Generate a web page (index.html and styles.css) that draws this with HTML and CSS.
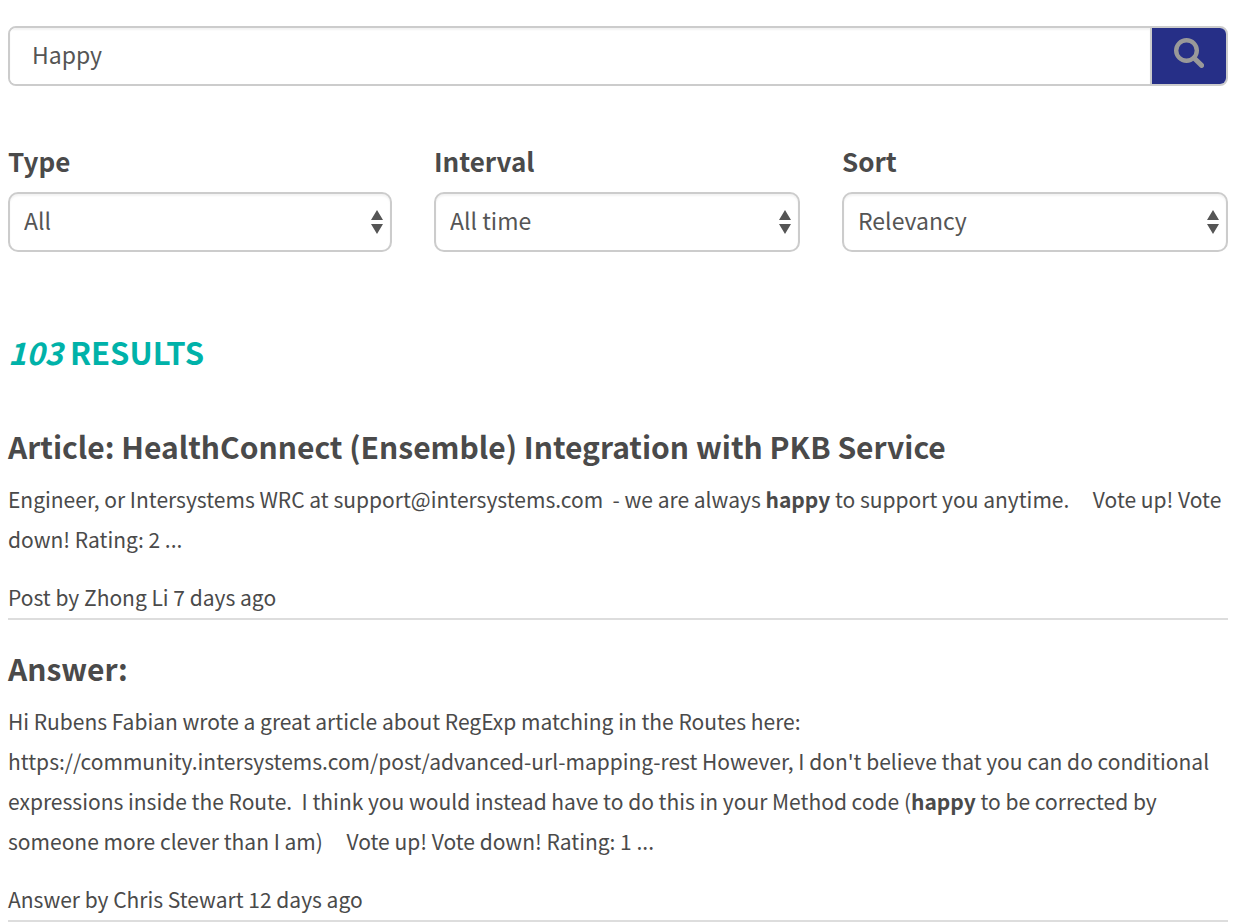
FILE: index.html
```html
<!DOCTYPE html>
<html lang="en">
<head>
  <meta charset="UTF-8" />
  <meta name="viewport" content="width=device-width, initial-scale=1.0"/>
  <title>Search results</title>
  <link rel="stylesheet" href="styles.css">
</head>
<body>
  <main class="search-page">
    <form class="search-box" onsubmit="event.preventDefault();">
      <input type="text" id="searchInput" value="Happy" aria-label="Search" />
      <button type="submit" aria-label="Search">
        <svg viewBox="0 0 30 30" width="30" height="30" aria-hidden="true">
          <circle cx="12.5" cy="12.5" r="10.3" fill="none" stroke="#999" stroke-width="4.4"/>
          <path d="M20 20l7.6 7.4" stroke="#999" stroke-width="5" stroke-linecap="round"/>
        </svg>
      </button>
    </form>

    <div class="filters">
      <div class="filter">
        <label for="type">Type</label>
        <div class="select-wrap">
          <select id="type">
            <option>All</option>
          </select>
          <svg class="arrows" viewBox="0 0 12 24" width="12" height="24" aria-hidden="true">
            <path d="M6 0l6 10H0zM0 14h12L6 24z" fill="#555"/>
          </svg>
        </div>
      </div>
      <div class="filter">
        <label for="interval">Interval</label>
        <div class="select-wrap">
          <select id="interval">
            <option>All time</option>
          </select>
          <svg class="arrows" viewBox="0 0 12 24" width="12" height="24" aria-hidden="true">
            <path d="M6 0l6 10H0zM0 14h12L6 24z" fill="#555"/>
          </svg>
        </div>
      </div>
      <div class="filter">
        <label for="sort">Sort</label>
        <div class="select-wrap">
          <select id="sort">
            <option>Relevancy</option>
          </select>
          <svg class="arrows" viewBox="0 0 12 24" width="12" height="24" aria-hidden="true">
            <path d="M6 0l6 10H0zM0 14h12L6 24z" fill="#555"/>
          </svg>
        </div>
      </div>
    </div>

    <h1><em>103</em> Results</h1>

    <article class="result">
      <h2>Article: HealthConnect (Ensemble) Integration with PKB Service</h2>
      <p class="snippet">Engineer, or Intersystems WRC at support@intersystems.com&nbsp; - we are always <strong>happy</strong> to support you anytime. &nbsp;&nbsp;&nbsp; Vote up! Vote down! Rating: 2 ...</p>
      <p class="meta">Post by Zhong Li 7 days ago</p>
    </article>

    <article class="result">
      <h2>Answer:</h2>
      <p class="snippet">Hi Rubens Fabian wrote a great article about RegExp matching in the Routes here: https://community.intersystems.com/post/advanced-url-mapping-rest However, I don't believe that you can do conditional expressions inside the Route.&nbsp; I think you would instead have to do this in your Method code (<strong>happy</strong> to be corrected by someone more clever than I am) &nbsp;&nbsp;&nbsp; Vote up! Vote down! Rating: 1 ...</p>
      <p class="meta">Answer by Chris Stewart 12 days ago</p>
    </article>
  </main>
</body>
</html>
```
FILE: styles.css
```css
body {
  margin: 0;
  font-family: "Noto Sans CJK SC", sans-serif;
  font-size: 21px;
  line-height: 40px;
  color: #4a4a4a;
  background: white;
}

.search-page {
  padding: 26px 14px 0 8px;
}

.search-box {
  display: flex;
  height: 60px;
  box-sizing: border-box;
  border: 2px solid #ccc;
  border-radius: 8px;
  overflow: hidden;
}

.search-box input {
  flex: 1;
  min-width: 0;
  border: none;
  border-right: 2px solid #ccc;
  padding: 0 22px 4px;
  font: inherit;
  font-size: 23px;
  color: #555;
  outline: none;
  box-shadow: inset 0 2px 2px rgba(0, 0, 0, 0.05);
}

.search-box button {
  display: flex;
  align-items: center;
  justify-content: center;
  width: 74px;
  border: none;
  padding: 0 0 6px;
  background: #262f87;
  cursor: pointer;
}

.filters {
  display: grid;
  grid-template-columns: 384fr 366fr 386fr;
  gap: 42px;
  margin-top: 55px;
}

.filter label {
  display: block;
  font-size: 26px;
  font-weight: 700;
  margin-bottom: 11px;
}

.select-wrap {
  position: relative;
}

.filter select {
  display: block;
  appearance: none;
  width: 100%;
  height: 60px;
  border: 2px solid #ccc;
  border-radius: 10px;
  padding: 0 14px 4px;
  font: inherit;
  font-size: 23px;
  color: #555;
  background: white;
  box-shadow: inset 0 2px 2px rgba(0, 0, 0, 0.05);
}

.arrows {
  position: absolute;
  top: 18px;
  right: 9px;
  pointer-events: none;
}

h1 {
  font-size: 31px;
  font-weight: 700;
  text-transform: uppercase;
  color: #00b2a9;
  margin: 80px 0 54px;
}

.result {
  border-bottom: 2px solid #ddd;
  padding-bottom: 1px;
  margin-bottom: 28px;
}

.result h2 {
  font-size: 30px;
  font-weight: 700;
  margin: 0 0 13px;
}

.result p {
  margin: 0;
}

.result .meta {
  margin-top: 18px;
}
```
